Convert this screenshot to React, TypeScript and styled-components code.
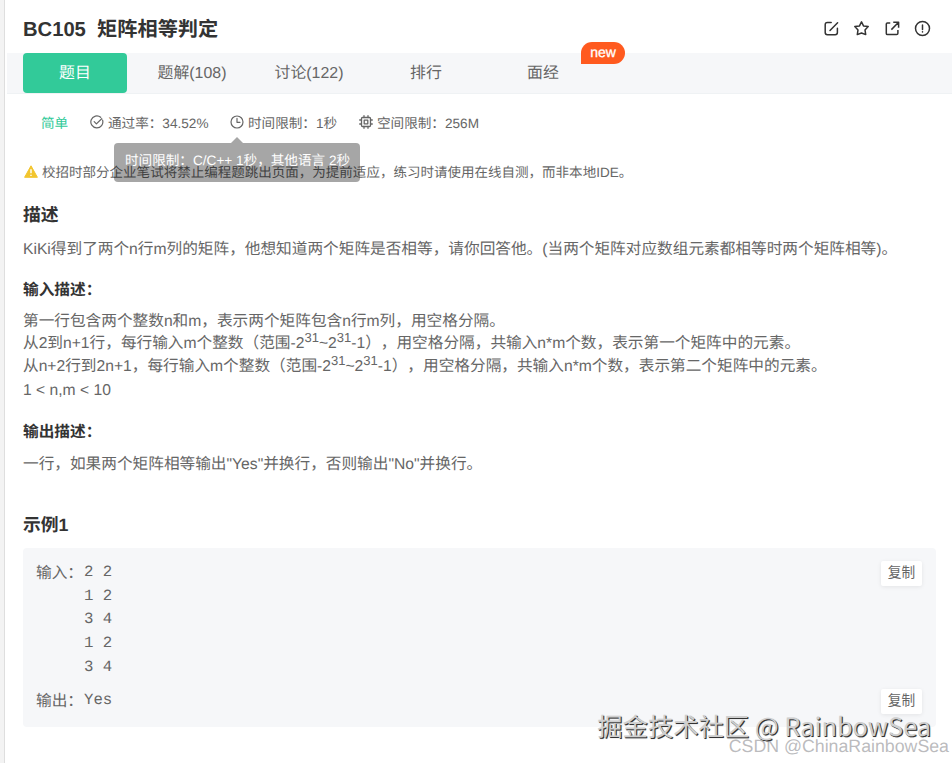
import React from "react";
import styled, { createGlobalStyle } from "styled-components";

const Global = createGlobalStyle`
  * { box-sizing: border-box; }
  html, body { margin: 0; padding: 0; background: #fff; }
  body {
    width: 952px;
    height: 763px;
    overflow: hidden;
    font-family: "Liberation Sans", "Noto Sans CJK SC", sans-serif;
    color: #666;
    text-rendering: geometricPrecision;
    text-spacing-trim: space-all;
  }
`;

const Page = styled.div`
  position: relative;
  display: flex;
  width: 952px;
  height: 763px;
  overflow: hidden;
`;

const Gutter = styled.div`
  flex: none;
  width: 5px;
  background: #f3f3f3;
  border-right: 1px solid #dedede;
`;

const Panel = styled.main`
  flex: 1;
  min-width: 0;
`;

const Header = styled.header`
  display: flex;
  align-items: center;
  justify-content: space-between;
  height: 53px;
  padding: 6px 21px 0 18px;
`;

const Title = styled.h1`
  margin: 0;
  font-size: 20.2px;
  line-height: 30px;
  font-weight: 700;
  color: #333;
  white-space: pre;
`;

const Actions = styled.div`
  display: flex;
  gap: 13.5px;
  height: 17px;
  margin-top: -2px;
  color: #333;
  svg { display: block; }
`;

const TabBar = styled.nav`
  display: flex;
  gap: 13px;
  height: 41px;
  margin-left: 2px;
  padding-left: 16px;
  background: #f6f7f9;
  border-bottom: 1px solid #eff2f4;
`;

const Tab = styled.div<{ $active?: boolean }>`
  position: relative;
  width: 104px;
  height: 40px;
  line-height: 42px;
  text-align: center;
  font-size: 15.9px;
  border-radius: 4px;
  color: ${(p) => (p.$active ? "#fff" : "#666")};
  background: ${(p) => (p.$active ? "#32ca99" : "transparent")};
`;

const NewBadge = styled.span`
  position: absolute;
  left: 90px;
  top: -11px;
  width: 44px;
  height: 22px;
  border-radius: 11px 11px 11px 0;
  background: #ff5a1f;
  color: #fff;
  font-size: 14px;
  font-weight: 400;
  line-height: 21px;
  -webkit-text-stroke: 0.3px #fff;
`;

const Content = styled.div`
  padding: 0 16px 0 18px;
`;

const Facts = styled.div`
  display: flex;
  align-items: center;
  height: 24px;
  margin-top: 16px;
  padding-left: 18px;
  font-size: 13.6px;
  white-space: nowrap;
`;

const Level = styled.span`
  width: 49px;
  color: #32ca99;
`;

const Fact = styled.span<{ $width: number }>`
  position: relative;
  display: flex;
  align-items: center;
  gap: 4px;
  width: ${(p) => p.$width}px;
  svg { flex: none; }
`;

const Tooltip = styled.div`
  position: absolute;
  z-index: 2;
  left: -116px;
  top: 31px;
  width: 246px;
  height: 39px;
  padding-left: 11px;
  border-radius: 4px;
  background: rgba(0, 0, 0, 0.35);
  color: #fff;
  font-size: 13.6px;
  line-height: 36px;
  &::before {
    content: "";
    position: absolute;
    left: 117px;
    top: -6px;
    border: solid transparent;
    border-width: 0 6px 6px;
    border-bottom-color: rgba(0, 0, 0, 0.35);
  }
`;

const Notice = styled.div`
  display: flex;
  align-items: center;
  gap: 4px;
  height: 24px;
  margin-top: 25px;
  padding-left: 1px;
  font-size: 13.52px;
  white-space: nowrap;
`;

const Heading = styled.h2<{ $top: number }>`
  margin: ${(p) => p.$top}px 0 0;
  height: 26px;
  line-height: 26px;
  font-size: 17.8px;
  font-weight: 700;
  color: #333;
`;

const SubHeading = styled.h3<{ $top: number }>`
  margin: ${(p) => p.$top}px 0 0;
  height: 24px;
  line-height: 24px;
  font-size: 15.7px;
  font-weight: 700;
  color: #333;
`;

const Line = styled.p<{ $top?: number; $height?: number }>`
  margin: ${(p) => p.$top ?? 0}px 0 0;
  height: ${(p) => p.$height ?? 23}px;
  line-height: 23px;
  font-size: 15.67px;
  white-space: nowrap;
  sup {
    font-size: 13px;
    line-height: 0;
    position: relative;
    vertical-align: baseline;
    top: -6px;
  }
`;

const Sample = styled.section`
  height: 179px;
  margin-top: 10px;
  padding: 13px 14px 0 13px;
  border-radius: 4px;
  background: #f6f7f9;
`;

const SampleRow = styled.div<{ $height: number }>`
  display: flex;
  align-items: flex-start;
  height: ${(p) => p.$height}px;
`;

const SampleLabel = styled.span`
  width: 48px;
  font-size: 15.7px;
  line-height: 26px;
  white-space: nowrap;
`;

const SampleText = styled.pre`
  flex: 1;
  margin: 0;
  font-family: "Liberation Mono", monospace;
  font-size: 15.7px;
  line-height: 23.7px;
`;

const CopyButton = styled.button`
  width: 41px;
  height: 25px;
  padding: 0 0 2px;
  border: 0;
  border-radius: 2px;
  background: #fff;
  box-shadow: 0 1px 4px rgba(0, 0, 0, 0.08);
  color: #666;
  font: 13.7px/22px "Liberation Sans", "Noto Sans CJK SC", sans-serif;
`;

const CommunityMark = styled.div`
  position: absolute;
  right: 21px;
  top: 708px;
  font: 25.3px/37px "Noto Sans CJK SC", sans-serif;
  color: #cfcfcf;
  text-shadow: 1px 1px 0 #333, 1px 1px 1px rgba(40, 40, 40, 0.5);
  white-space: nowrap;
`;

const BlogMark = styled.div`
  position: absolute;
  right: 3px;
  top: 735px;
  font-size: 17.75px;
  line-height: 22px;
  color: rgba(175, 175, 178, 0.85);
  white-space: nowrap;
`;

const stroke = {
  fill: "none",
  stroke: "currentColor",
  strokeWidth: 1.5,
  strokeLinecap: "round" as const,
  strokeLinejoin: "round" as const,
};

const EditIcon = () => (
  <svg width="17" height="17" viewBox="0 0 17 17" {...stroke}>
    <path d="M8.2 2.5H4.4Q2.2 2.5 2.2 4.7v7.8Q2.2 14.7 4.4 14.7h7.8q2.2 0 2.2-2.2V8.2M7 10.5l7.6-7.7" />
  </svg>
);
const StarIcon = () => (
  <svg width="17" height="17" viewBox="0 0 17 17" {...stroke}>
    <path d="m8.5 1.8 2 4.1 4.7.7-3.2 3.3.7 4.7-4.2-1.6-4.2 1.6.7-4.7L1.8 6.6l4.7-.7Z" />
  </svg>
);
const ShareIcon = () => (
  <svg width="17" height="17" viewBox="0 0 17 17" {...stroke} strokeLinecap="square">
    <path d="M5.5 3H3.4Q2.3 3 2.3 4.1v9.3Q2.3 14.6 3.5 14.6h9.1q1.3 0 1.3-1.3V10.8M7.9 9.1l6.2-6.3M10 2.3h4.6v4.6" />
  </svg>
);
const AlertIcon = () => (
  <svg width="17" height="17" viewBox="0 0 17 17" {...stroke}>
    <circle cx="8.5" cy="8.5" r="7" />
    <path d="M8.5 4.9v4.5M8.5 11.7v.2" />
  </svg>
);
const CheckIcon = () => (
  <svg width="14" height="14" viewBox="0 0 14 14" {...stroke} strokeWidth={1.2}>
    <path d="M12.6 5.2A6 6 0 1 1 10.7 2.3M4.2 6.7l2.2 2.2 5.3-5.2" />
  </svg>
);
const ClockIcon = () => (
  <svg width="14" height="14" viewBox="0 0 14 14" {...stroke} strokeWidth={1.2}>
    <circle cx="7" cy="7" r="6" />
    <path d="M7 3.4V7.3h3" />
  </svg>
);
const ChipIcon = () => (
  <svg width="14" height="14" viewBox="0 0 14 14" {...stroke} strokeWidth={1.3}>
    <rect x="2.5" y="2.5" width="9" height="9" rx="1" />
    <rect x="5.2" y="5.2" width="3.6" height="3.6" />
    <path d="M5 .7v1.8M9 .7v1.8M5 11.5v1.8M9 11.5v1.8M.7 5h1.8M.7 9h1.8M11.5 5h1.8M11.5 9h1.8" />
  </svg>
);
const WarningIcon = () => (
  <svg width="14" height="13" viewBox="0 0 14 13">
    <path d="M7 .8 13.4 12.3H.6Z" fill="#f2c52e" stroke="#f2c52e" strokeLinejoin="round" />
    <path d="M7 4.3v4M7 9.7v1.2" stroke="#fff" strokeWidth="1.4" />
  </svg>
);

export default function App() {
  return (
    <>
      <Global />
      <Page>
        <Gutter />
        <Panel>
          <Header>
            <Title>BC105{"  "}矩阵相等判定</Title>
            <Actions>
              <EditIcon />
              <StarIcon />
              <ShareIcon />
              <AlertIcon />
            </Actions>
          </Header>
          <TabBar>
            <Tab $active>题目</Tab>
            <Tab>题解(108)</Tab>
            <Tab>讨论(122)</Tab>
            <Tab>排行</Tab>
            <Tab>
              面经<NewBadge>new</NewBadge>
            </Tab>
          </TabBar>
          <Content>
            <Facts>
              <Level>简单</Level>
              <Fact $width={140}>
                <CheckIcon />
                通过率：34.52%
              </Fact>
              <Fact $width={129}>
                <ClockIcon />
                时间限制：1秒
                <Tooltip>时间限制：C/C++ 1秒，其他语言 2秒</Tooltip>
              </Fact>
              <Fact $width={130}>
                <ChipIcon />
                空间限制：256M
              </Fact>
            </Facts>
            <Notice>
              <WarningIcon />
              校招时部分企业笔试将禁止编程题跳出页面，为提前适应，练习时请使用在线自测，而非本地IDE。
            </Notice>
            <Heading $top={19}>描述</Heading>
            <Line $top={10}>
              KiKi得到了两个n行m列的矩阵，他想知道两个矩阵是否相等，请你回答他。(当两个矩阵对应数组元素都相等时两个矩阵相等)。
            </Line>
            <SubHeading $top={18}>输入描述：</SubHeading>
            <Line $top={7} $height={22}>
              第一行包含两个整数n和m，表示两个矩阵包含n行m列，用空格分隔。
            </Line>
            <Line>
              从2到n+1行，每行输入m个整数（范围-2<sup>31</sup>~2<sup>31</sup>-1），用空格分隔，共输入n*m个数，表示第一个矩阵中的元素。
            </Line>
            <Line $height={24}>
              从n+2行到2n+1，每行输入m个整数（范围-2<sup>31</sup>~2<sup>31</sup>-1），用空格分隔，共输入n*m个数，表示第二个矩阵中的元素。
            </Line>
            <Line>1 &lt; n,m &lt; 10</Line>
            <SubHeading $top={19}>输出描述：</SubHeading>
            <Line $top={8}>一行，如果两个矩阵相等输出"Yes"并换行，否则输出"No"并换行。</Line>
            <Heading $top={36}>示例1</Heading>
            <Sample>
              <SampleRow $height={128}>
                <SampleLabel>输入：</SampleLabel>
                <SampleText>{"2 2\n1 2\n3 4\n1 2\n3 4"}</SampleText>
                <CopyButton>复制</CopyButton>
              </SampleRow>
              <SampleRow $height={26}>
                <SampleLabel>输出：</SampleLabel>
                <SampleText>Yes</SampleText>
                <CopyButton>复制</CopyButton>
              </SampleRow>
            </Sample>
          </Content>
        </Panel>
        <BlogMark>CSDN @ChinaRainbowSea</BlogMark>
        <CommunityMark>掘金技术社区 @ RainbowSea</CommunityMark>
      </Page>
    </>
  );
}
